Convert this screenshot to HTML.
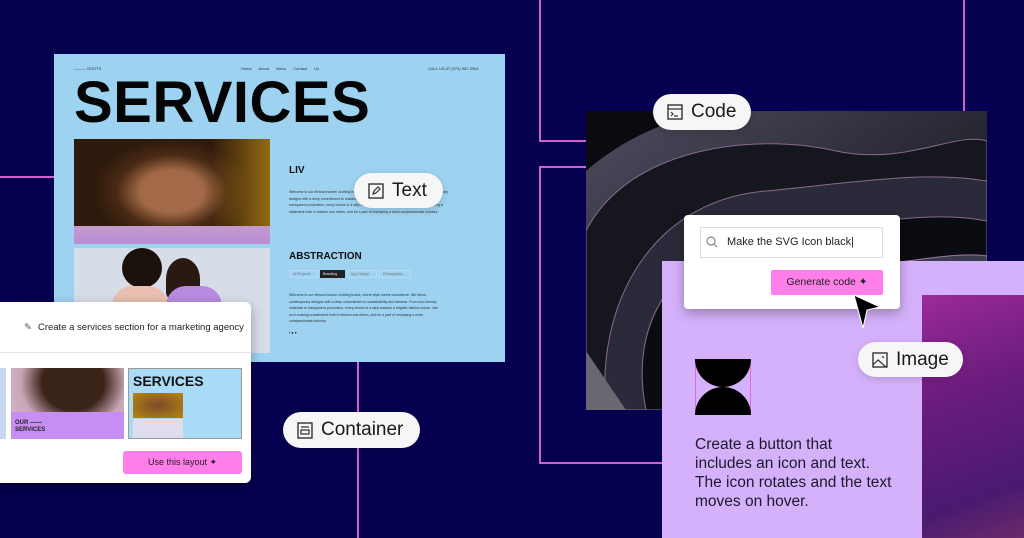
<!DOCTYPE html>
<html><head><meta charset="utf-8"><style>
*{margin:0;padding:0;box-sizing:border-box}
body{width:1024px;height:538px;overflow:hidden;background:#060050;position:relative;font-family:"Liberation Sans",sans-serif}
.a{position:absolute}
.ln{position:absolute;background:#d25fd6}
.pill{position:absolute;background:#f6f6f6;border-radius:20px;display:flex;align-items:center;gap:8px;color:#1a1a1a;box-shadow:0 2px 8px rgba(0,0,0,.15)}
.t{position:absolute;font-size:3.5px;color:#333;line-height:6.5px}
</style></head><body>
<div class="ln" style="left:0;top:176px;width:56px;height:2px"></div>
<div class="ln" style="left:539px;top:0;width:2px;height:142px"></div>
<div class="ln" style="left:539px;top:140px;width:48px;height:2px"></div>
<div class="ln" style="left:539px;top:166px;width:48px;height:2px"></div>
<div class="ln" style="left:539px;top:166px;width:2px;height:298px"></div>
<div class="ln" style="left:539px;top:462px;width:124px;height:2px"></div>
<div class="ln" style="left:357px;top:360px;width:2px;height:178px"></div>
<div class="ln" style="left:963px;top:0;width:2px;height:112px"></div>

<div class="a" style="left:54px;top:54px;width:451px;height:308px;background:#9dd2f1">
 <div class="a" style="left:20px;top:12px;font-size:4px;color:#333">——— ROOTS</div>
 <div class="a" style="left:187px;top:12px;font-size:4px;color:#333;word-spacing:6px">Home About Menu Contact&nbsp;Us</div>
 <div class="a" style="left:374px;top:12px;font-size:4px;color:#333">CALL US AT (973) 987-2904</div>
 <div class="a" style="left:20px;top:18px;font-size:58px;font-weight:bold;letter-spacing:0.5px;color:#050505;line-height:62px">SERVICES</div>
 <div class="a" style="left:20px;top:85px;width:196px;height:105px;background:radial-gradient(ellipse 40% 50% at 50% 50%,#a26a48 0 40%,#4a2a14 70%,#2e1a0c 100%),#8a6010"></div>
 <div class="a" style="left:20px;top:85px;width:196px;height:105px;background:linear-gradient(90deg,transparent 70%,rgba(190,140,20,.7))"></div>
 <div class="a" style="left:20px;top:172px;width:196px;height:18px;background:linear-gradient(#c49acc,#b98dd4)"></div>
 <div class="a" style="left:20px;top:194px;width:196px;height:105px;background:#d6dce8"></div>
 <div class="a" style="left:68px;top:194px;width:40px;height:40px;border-radius:50%;background:#1b110c"></div>
 <div class="a" style="left:112px;top:204px;width:34px;height:42px;border-radius:50% 50% 20% 20%;background:#2a1812"></div>
 <div class="a" style="left:58px;top:232px;width:56px;height:20px;border-radius:20px 20px 0 0;background:#e9bfb0"></div>
 <div class="a" style="left:112px;top:232px;width:56px;height:20px;border-radius:20px 20px 0 0;background:#b98be0"></div>
 <div class="a" style="left:235px;top:111px;font-size:10px;font-weight:bold;color:#111">LIV</div>
 <div class="t" style="left:235px;top:135px;width:162px">Welcome to our ethical modern clothing brand, where style meets conscience. We blend contemporary designs with a deep commitment to sustainability and fairness. From eco-friendly materials to transparent production, every choice is a step towards a brighter fashion future. Join us in making a statement both in fashion and ethics, and be a part of reshaping a more compassionate industry.</div>
 <div class="a" style="left:235px;top:197px;font-size:10px;font-weight:bold;color:#111">ABSTRACTION</div>
 <div class="a" style="left:236px;top:216px;width:28px;height:8px;border:1px solid #b8dcf2;font-size:3.5px;color:#777;padding:1px 2px">All Projects</div>
 <div class="a" style="left:266px;top:216px;width:25px;height:8px;background:#222;font-size:3.5px;color:#eee;padding:1.5px 3px">Branding</div>
 <div class="a" style="left:293px;top:216px;width:30px;height:8px;border:1px solid #b8dcf2;font-size:3.5px;color:#777;padding:1px 3px">App Design</div>
 <div class="a" style="left:325px;top:216px;width:32px;height:8px;border:1px solid #b8dcf2;font-size:3.5px;color:#777;padding:1px 3px">Photography</div>
 <div class="t" style="left:235px;top:238px;width:150px">Welcome to our ethical modern clothing brand, where style meets conscience. We blend contemporary designs with a deep commitment to sustainability and fairness. From eco-friendly materials to transparent production, every choice is a step towards a brighter fashion future. Join us in making a statement both in fashion and ethics, and be a part of reshaping a more compassionate industry.</div>
 <div class="a" style="left:235px;top:276px;font-size:4px;color:#222">f ● ▾</div>
</div>

<div class="pill" style="left:354px;top:173px;width:89px;height:35px;padding-left:14px;font-size:19px">
 <svg width="16" height="16" viewBox="0 0 16 16"><rect x="1" y="1" width="14" height="14" fill="none" stroke="#333" stroke-width="1.4"/><path d="M5 11l1-3 4-4 2 2-4 4z" fill="none" stroke="#333" stroke-width="1.2"/></svg>Text</div>

<div class="a" style="left:0;top:302px;width:251px;height:181px;background:#fff;border-radius:0 6px 6px 0;box-shadow:0 4px 12px rgba(0,0,0,.3)">
 <div class="a" style="left:24px;top:20px;font-size:9.5px;color:#222;white-space:nowrap"><span style="color:#555;margin-right:6px">✎</span>Create a services section for a marketing agency</div>
 <div class="a" style="left:0;top:50px;width:251px;height:1px;background:#e6e6e6"></div>
 <div class="a" style="left:0;top:66px;width:6px;height:71px;background:#c8d8f0"></div>
 <div class="a" style="left:11px;top:66px;width:113px;height:71px;background:radial-gradient(ellipse at 55% 20%,#3a2418 0 35%,#caa6b5 60%,#d8c0d4)"></div>
 <div class="a" style="left:11px;top:110px;width:113px;height:27px;background:#c68ef3"></div>
 <div class="a" style="left:15px;top:118px;font-size:6px;font-weight:bold;color:#222;line-height:7px">OUR ——<br>SERVICES</div>
 <div class="a" style="left:128px;top:66px;width:114px;height:71px;background:#a9dbf6;border:1px solid #999"></div>
 <div class="a" style="left:133px;top:71px;font-size:14px;font-weight:bold;color:#111">SERVICES</div>
 <div class="a" style="left:133px;top:91px;width:50px;height:25px;background:radial-gradient(#7a4a2c,#b8870f)"></div>
 <div class="a" style="left:133px;top:117px;width:50px;height:19px;background:#dde"></div>
 <div class="a" style="left:123px;top:149px;width:119px;height:23px;background:#ff7ee9;border-radius:3px;font-size:9px;color:#222;text-align:center;line-height:23px">Use this layout ✦</div>
</div>

<div class="pill" style="left:283px;top:412px;width:137px;height:36px;padding-left:14px;font-size:19px">
 <svg width="16" height="17" viewBox="0 0 16 17"><rect x="1" y="1" width="14" height="15" fill="none" stroke="#333" stroke-width="1.4"/><path d="M4 5h8M4 8h8v4H4z" fill="none" stroke="#333" stroke-width="1.2"/></svg>Container</div>

<div class="a" style="left:586px;top:111px;width:401px;height:299px;overflow:hidden;background:#0d0d14">
 <svg width="401" height="299" viewBox="0 0 401 299">
  <defs><linearGradient id="g" x1="0" y1="0" x2="1" y2="1"><stop offset="0" stop-color="#6a6a82"/><stop offset="1" stop-color="#06060a"/></linearGradient></defs>
  <rect width="401" height="299" fill="#0a0a10"/>
  <path d="M0 60 C80 -10 200 -20 300 0 L401 0 L401 299 L0 299Z" fill="url(#g)" opacity=".7"/>
  <path d="M0 120 C40 40 160 20 250 40 C320 55 370 20 401 30 L401 299 L0 299Z" fill="#16161f" stroke="#8a6a8a" stroke-width="1"/>
  <path d="M20 299 C10 200 60 90 180 80 C280 70 340 60 401 70 L401 299Z" fill="#2a2a3a" stroke="#8a6a8a" stroke-width="1"/>
  <path d="M60 299 C40 200 100 130 200 120 C300 110 350 100 401 110 L401 299Z" fill="#0b0b12" stroke="#8a6a8a" stroke-width="1"/>
  <path d="M100 299 C90 220 140 170 240 160 C320 152 370 140 401 145 L401 299Z" fill="#3b3b4e" stroke="#9a7a9a" stroke-width="1"/>
  <path d="M0 240 L40 299 L0 299Z" fill="#6a6672"/>
 </svg>
</div>

<div class="pill" style="left:653px;top:94px;width:98px;height:36px;padding-left:14px;font-size:19px">
 <svg width="16" height="16" viewBox="0 0 16 16"><rect x="1" y="1" width="14" height="14" fill="none" stroke="#333" stroke-width="1.4"/><path d="M1 5h14M4 8l2 2-2 2M7 12h4" fill="none" stroke="#333" stroke-width="1.2"/></svg>Code</div>

<div class="a" style="left:662px;top:261px;width:362px;height:277px;background:#d5b1fb"></div>
<div class="a" style="left:922px;top:295px;width:102px;height:243px;background:linear-gradient(160deg,#9b2a9a,#6a1c7c 40%,#4a1a70 80%,#6a2a6a)"></div>
<svg class="a" style="left:695px;top:359px" width="56" height="56" viewBox="0 0 56 56"><rect x=".5" y=".5" width="55" height="55" fill="none" stroke="#e06ad8"/><path d="M0 0H56A28 28 0 0 1 0 0Z" fill="#000"/><path d="M0 56A28 28 0 0 1 56 56Z" fill="#000"/></svg>
<div class="a" style="left:695px;top:435px;font-size:15.5px;line-height:19px;color:#1a1a2a;white-space:nowrap">Create a button that<br>includes an icon and text.<br>The icon rotates and the text<br>moves on hover.</div>

<div class="a" style="left:684px;top:215px;width:216px;height:94px;background:#fff;border-radius:4px;box-shadow:0 4px 12px rgba(0,0,0,.3)">
 <div class="a" style="left:16px;top:12px;width:183px;height:31px;border:1px solid #ddd;font-size:11px;color:#222;line-height:29px;padding-left:26px">Make the SVG Icon black|</div>
 <svg class="a" style="left:22px;top:21px" width="12" height="12" viewBox="0 0 12 12"><circle cx="5" cy="5" r="4" fill="none" stroke="#888" stroke-width="1.2"/><path d="M8 8l3 3" stroke="#888" stroke-width="1.2"/></svg>
 <div class="a" style="left:87px;top:55px;width:112px;height:25px;background:#ff7ee9;border-radius:2px;font-size:10.5px;color:#222;line-height:25px;text-align:center">Generate code ✦</div>
</div>
<svg class="a" style="left:852px;top:294px" width="30" height="36" viewBox="0 0 30 36"><path d="M2 1L28 13L15 16L11 34Z" fill="#000" stroke="#fff" stroke-width="1"/></svg>

<div class="pill" style="left:858px;top:342px;width:105px;height:35px;padding-left:14px;font-size:19px">
 <svg width="16" height="16" viewBox="0 0 16 16"><rect x="1" y="1" width="14" height="14" fill="none" stroke="#333" stroke-width="1.4"/><path d="M1 13l5-5 8 7M10 4l2 2" fill="none" stroke="#333" stroke-width="1.2"/></svg>Image</div>
</body></html>
